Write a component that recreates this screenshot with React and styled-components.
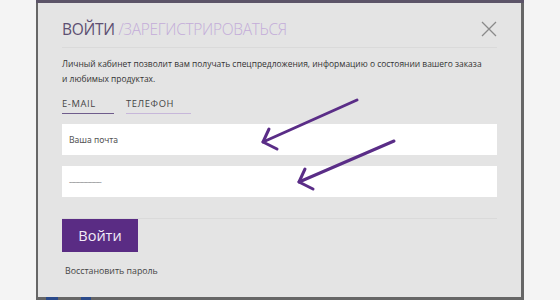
import React from "react";
import styled, { createGlobalStyle } from "styled-components";

const Global = createGlobalStyle`
  html, body { margin: 0; padding: 0; background: #f4f4f4; }
  body { font-family: "Open Sans", "Liberation Sans", sans-serif; }
`;

const Page = styled.div`
  width: 560px;
  height: 300px;
  overflow: hidden;
  display: flex;
  padding-left: 36px;
  box-sizing: border-box;
`;

const Backdrop = styled.div`
  width: 488px;
  height: 300px;
  box-sizing: border-box;
  background: #666;
  border-top: 3px solid #5c5468;
  padding: 0 3px 3px 2px;
  display: flex;
  flex-direction: column;
  position: relative;
`;

const Spot = styled.span`
  position: absolute;
  bottom: 0;
  height: 3px;
  background: #2b4a8a;
`;

const Modal = styled.div`
  flex: 1;
  background: #e4e4e4;
  padding: 0 24px 0 24px;
  display: flex;
  flex-direction: column;
  position: relative;
`;

const Header = styled.div`
  display: flex;
  align-items: center;
  justify-content: space-between;
  height: 43px;
  padding-top: 1px;
  border-bottom: 1px solid #dadada;
`;

const Title = styled.div`
  font-size: 15.5px;
  letter-spacing: -0.3px;
  font-weight: 400;
  color: #5d4f72;
  margin-top: 6px;
`;

const TitleLight = styled.span`
  color: #c3acd9;
  font-weight: 300;
`;

const Close = styled.button`
  border: 0;
  background: none;
  padding: 0;
  width: 16px;
  height: 16px;
  margin-top: 6px;
  cursor: pointer;
  display: flex;
`;

const Desc = styled.p`
  margin: 8px 0 0;
  font-size: 8.45px;
  line-height: 15px;
  color: #333;
  white-space: nowrap;
`;

const Tabs = styled.div`
  display: flex;
  gap: 12px;
  margin-top: 11px;
`;

const Tab = styled.div`
  font-size: 9.4px;
  letter-spacing: 0.6px;
  color: #444;
  padding-bottom: 3px;
  width: ${(p) => p.$w}px;
  border-bottom: 1px solid ${(p) => (p.$active ? "#6f5c8c" : "#c7b7da")};
`;

const Field = styled.div`
  margin-top: ${(p) => p.$mt}px;
  height: 31px;
  background: #fff;
  display: flex;
  align-items: center;
  padding-left: 7px;
  font-size: 8.6px;
  color: #555;
  font-family: "Noto Sans", "Open Sans", sans-serif;
`;

const Dots = styled.span`
  font-size: 6px;
  letter-spacing: -0.6px;
  color: #444;
`;

const Divider = styled.div`
  margin-top: 21px;
  border-top: 1px solid #dadada;
`;

const Submit = styled.button`
  align-self: flex-start;
  width: 76px;
  height: 33px;
  margin-top: 0;
  border: 0;
  background: #5a2c84;
  color: #f2ecf8;
  font-family: "Open Sans", sans-serif;
  font-size: 14.5px;
  font-weight: 400;
`;

const Restore = styled.a`
  margin-top: 13px;
  margin-left: 3px;
  font-size: 8.8px;
  color: #444;
  text-decoration: none;
`;

const Arrows = styled.svg`
  position: absolute;
  left: 0;
  top: 0;
  pointer-events: none;
`;

function Arrow({ x1, y1, x2, y2 }) {
  return (
    <g stroke="#5a2d87" strokeWidth="3" fill="none" strokeLinecap="round" strokeLinejoin="round">
      <line x1={x1} y1={y1} x2={x2} y2={y2} />
      <polyline points={`${x2 + 6},${y2 - 13} ${x2},${y2} ${x2 + 14},${y2 + 7}`} />
    </g>
  );
}

export default function App() {
  return (
    <>
      <Global />
      <Page>
        <Backdrop>
          <Spot style={{ left: 10, width: 12 }} />
          <Spot style={{ left: 45, width: 10 }} />
          <Modal>
            <Header>
              <Title>
                ВОЙТИ <TitleLight>/ЗАРЕГИСТРИРОВАТЬСЯ</TitleLight>
              </Title>
              <Close aria-label="close">
                <svg width="16" height="16" viewBox="0 0 16 16">
                  <path d="M1 1L15 15M15 1L1 15" stroke="#8a8a8a" strokeWidth="1.3" />
                </svg>
              </Close>
            </Header>
            <Desc>
              Личный кабинет позволит вам получать спецпредложения, информацию о состоянии вашего заказа
              <br />и любимых продуктах.
            </Desc>
            <Tabs>
              <Tab $active $w={52}>E-MAIL</Tab>
              <Tab $w={65}>ТЕЛЕФОН</Tab>
            </Tabs>
            <Field $mt={10}>Ваша почта</Field>
            <Field $mt={11}>
              <Dots>------------------------</Dots>
            </Field>
            <Divider />
            <Submit>Войти</Submit>
            <Restore href="#">Восстановить пароль</Restore>
            <Arrows width="484" height="297" viewBox="38 3 484 297">
              <Arrow x1={357} y1={100} x2={263} y2={142} />
              <Arrow x1={394} y1={141} x2={299} y2={182} />
            </Arrows>
          </Modal>
        </Backdrop>
      </Page>
    </>
  );
}
